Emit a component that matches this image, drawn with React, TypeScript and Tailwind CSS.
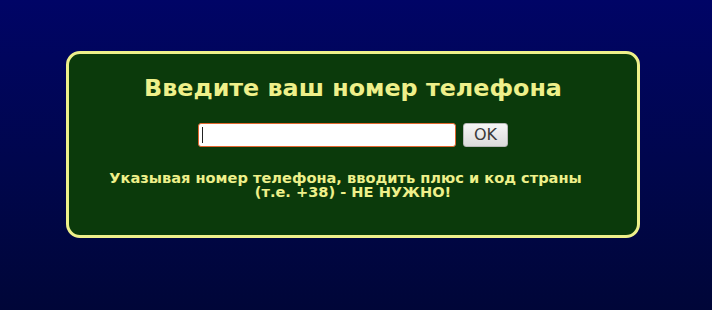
export default function App() {
  return (
    <div
      className="h-[310px] w-[712px] overflow-hidden bg-gradient-to-b from-[#000466] to-[#000638] pt-[51px] pl-[66px]"
      style={{ fontFamily: '"DejaVu Sans", sans-serif' }}
    >
      <div className="flex h-[187px] w-[574px] flex-col items-center rounded-[14px] border-[3px] border-[#eef08a] bg-[#0b3a0b] pt-[19px]">
        <h1 className="text-[23.8px] font-bold leading-[30px] text-[#eef08a]">Введите ваш номер телефона</h1>
        <div className="mt-[20px] flex items-center gap-[7px]">
          <div className="flex h-[24px] w-[258px] items-center rounded-[3px] border border-[#e2672f] bg-white pl-[3px]">
            <div className="h-[16px] w-px bg-[#222]" />
          </div>
          <button className="h-[24px] w-[45px] rounded-[3px] border border-[#b8b8b8] bg-gradient-to-b from-[#f6f6f6] to-[#dcdcdc] text-[16px] leading-none text-[#3a3a3a]">
            OK
          </button>
        </div>
        <p className="mt-[24px] flex flex-col items-center text-[14.6px] font-bold leading-[14px] text-[#eef08a]">
          <span className="mr-[15px]">Указывая номер телефона, вводить плюс и код страны</span>
          <span>(т.е. +38) - НЕ НУЖНО!</span>
        </p>
      </div>
    </div>
  )
}
